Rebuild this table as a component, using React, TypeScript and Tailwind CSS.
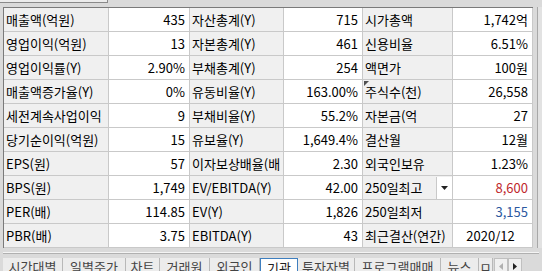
import React from "react";

type Cell = { label: string; value: string; cls?: string; dropdown?: boolean; marker?: boolean; center?: boolean };

const rows: Cell[][] = [
  [
    { label: "매출액(억원)", value: "435" },
    { label: "자산총계(Y)", value: "715" },
    { label: "시가총액", value: "1,742억" },
  ],
  [
    { label: "영업이익(억원)", value: "13" },
    { label: "자본총계(Y)", value: "461" },
    { label: "신용비율", value: "6.51%" },
  ],
  [
    { label: "영업이익률(Y)", value: "2.90%" },
    { label: "부채총계(Y)", value: "254" },
    { label: "액면가", value: "100원" },
  ],
  [
    { label: "매출액증가율(Y)", value: "0%" },
    { label: "유동비율(Y)", value: "163.00%" },
    { label: "주식수(천)", value: "26,558", marker: true },
  ],
  [
    { label: "세전계속사업이익", value: "9" },
    { label: "부채비율(Y)", value: "55.2%" },
    { label: "자본금(억", value: "27" },
  ],
  [
    { label: "당기순이익(억원)", value: "15" },
    { label: "유보율(Y)", value: "1,649.4%" },
    { label: "결산월", value: "12월" },
  ],
  [
    { label: "EPS(원)", value: "57" },
    { label: "이자보상배율(배", value: "2.30" },
    { label: "외국인보유", value: "1.23%" },
  ],
  [
    { label: "BPS(원)", value: "1,749" },
    { label: "EV/EBITDA(Y)", value: "42.00" },
    { label: "250일최고", value: "8,600", cls: "text-[#c0282d]", dropdown: true },
  ],
  [
    { label: "PER(배)", value: "114.85" },
    { label: "EV(Y)", value: "1,826" },
    { label: "250일최저", value: "3,155", cls: "text-[#2c58a0]" },
  ],
  [
    { label: "PBR(배)", value: "3.75" },
    { label: "EBITDA(Y)", value: "43" },
    { label: "최근결산(연간)", value: "2020/12", center: true },
  ],
];

const labelW = ["w-[105px]", "w-[94px]", "w-[90px]"];
const valueW = ["w-[81px]", "w-[79px]", "w-[80px]"];

const tabs = [
  { t: "시간대별", w: "w-[60px]" },
  { t: "일별주가", w: "w-[63px]" },
  { t: "차트", w: "w-[34px]" },
  { t: "거래원", w: "w-[50px]" },
  { t: "외국인", w: "w-[50px]" },
  { t: "기관", w: "w-[38px]", sel: true },
  { t: "투자자별", w: "w-[57px]" },
  { t: "프로그램매매", w: "w-[86px]" },
  { t: "뉴스", w: "w-[38px]" },
  { t: "ㅁ", w: "w-[14px]" },
];

export default function App() {
  return (
    <div
      className="w-[542px] h-[271px] overflow-hidden bg-[#dadada] relative text-[13px] text-black"
      style={{ fontFamily: '"Noto Sans CJK KR", "Noto Sans", sans-serif' }}
    >
      {/* top strip */}
      <div className="h-[7px] flex">
        <div className="w-[108px] h-[3px] bg-[#ececec] border-r border-b border-[#8a8a8a]" />
      </div>
      <div className="flex">
        <div className="ml-[3px] w-[530px] border-l border-t border-[#7a7a7a] bg-white">
          {rows.map((r, i) => (
            <div key={i} className="flex h-[24px]">
              {r.map((c, j) => (
                <React.Fragment key={j}>
                  <div
                    className={`${labelW[j]} relative flex items-center justify-between bg-[#f0f0f0] border-r border-b border-[#c9c9c9] pl-[2px] leading-none whitespace-nowrap overflow-hidden`}
                  >
                    {c.marker && (
                      <div className="absolute left-[1px] top-[1px] w-0 h-0 border-t-[5px] border-r-[5px] border-t-[#505050] border-r-transparent" />
                    )}
                    <span>{c.label}</span>
                    {c.dropdown && (
                      <div className="h-[22px] w-[16px] bg-white border-l border-[#c9c9c9] flex items-center justify-center">
                        <svg width="7" height="4" viewBox="0 0 7 4">
                          <path d="M0 0H7L3.5 4Z" fill="#222" />
                        </svg>
                      </div>
                    )}
                  </div>
                  <div
                    className={`${valueW[j]} flex items-center ${c.center ? "justify-center" : "justify-end"} bg-white border-r border-b border-[#c9c9c9] pr-[4px] leading-none whitespace-nowrap ${c.cls ?? ""}`}
                  >
                    {c.value}
                  </div>
                </React.Fragment>
              ))}
            </div>
          ))}
        </div>
        <div className="w-[9px] flex">
          <div className="w-[4px]" />
          <div className="w-[5px] border-l border-[#a8a8a8] bg-[#e2e2e2]" />
        </div>
      </div>
      {/* separator */}
      <div className="h-[10px] flex flex-col">
        <div className="h-[4px]" />
        <div className="h-[1px] bg-[#f4f4f4] mx-[3px]" />
        <div className="h-[1px] bg-[#b0b0b0] mx-[3px]" />
      </div>
      {/* tabs */}
      <div className="flex h-[14px] pl-[3px] text-[#444]">
        {tabs.map((t, i) => (
          <div
            key={i}
            className={`${t.w} h-[16px] flex items-start justify-center pt-[2px] leading-none whitespace-nowrap ${
              t.sel
                ? "bg-white border border-[#3f7fbf] text-[#222]"
                : "bg-[#ececec] border-r border-[#b8b8b8]"
            }`}
          >
            {t.t}
          </div>
        ))}
        <div className="w-[14px] h-[16px] bg-[#f0f0f0] border border-[#c0c0c0] flex items-center justify-center ml-[1px]">
          <svg width="4" height="7" viewBox="0 0 4 7">
            <path d="M4 0V7L0 3.5Z" fill="#b0b0b0" />
          </svg>
        </div>
        <div className="w-[14px] h-[16px] bg-[#f0f0f0] border border-[#c0c0c0] flex items-center justify-center">
          <svg width="4" height="7" viewBox="0 0 4 7">
            <path d="M0 0V7L4 3.5Z" fill="#222" />
          </svg>
        </div>
      </div>
    </div>
  );
}
